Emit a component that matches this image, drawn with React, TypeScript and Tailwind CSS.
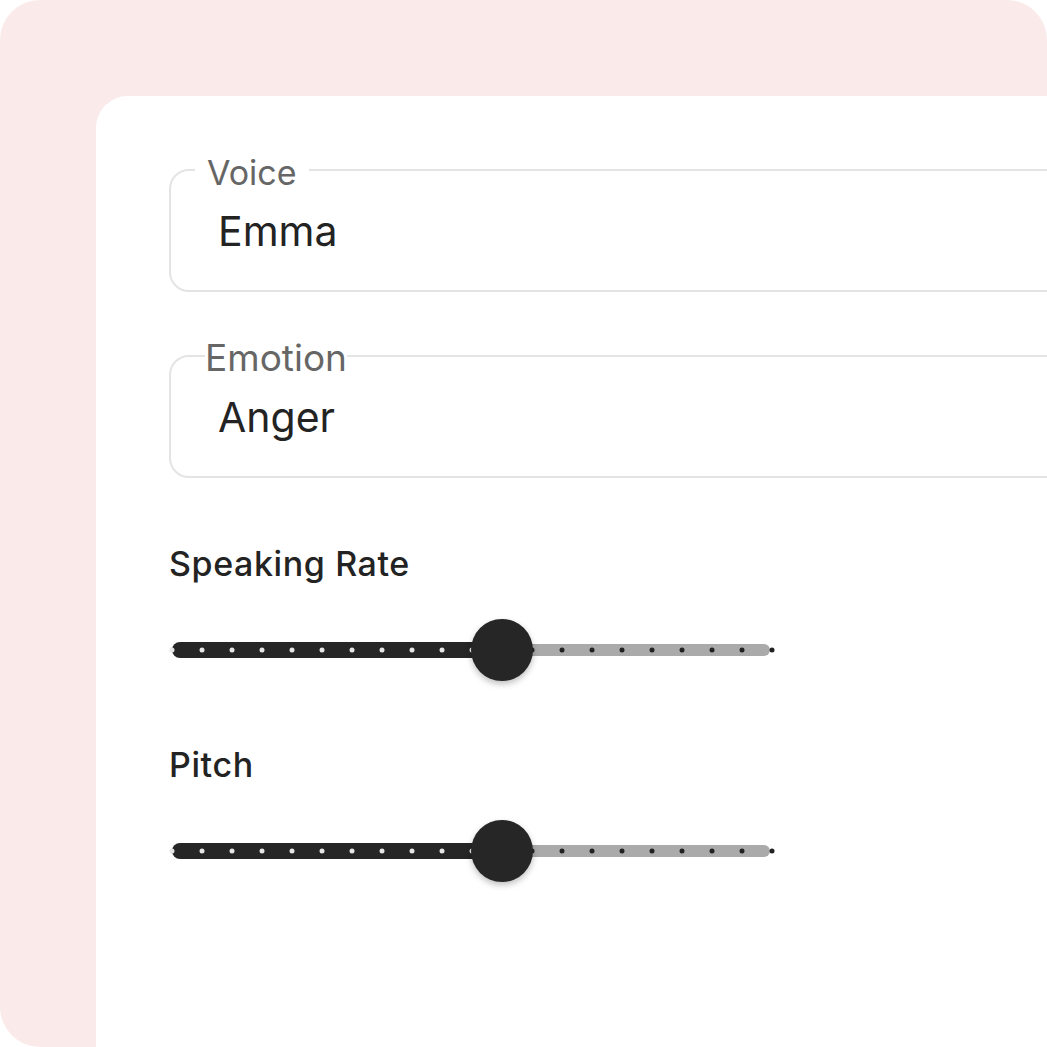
import { useState } from "react";

interface Field {
  label: string;
  value: string;
  legendClass: string;
}

const fields: Field[] = [
  { label: "Voice", value: "Emma", legendClass: "-top-[18px] left-[24px] px-3 text-[34px]" },
  { label: "Emotion", value: "Anger", legendClass: "-top-[19px] left-[34px] px-0 text-[37px]" },
];

const TICKS = Array.from({ length: 21 }, (_, i) => i);
const STEP = 30;

function OutlinedField({ field }: { field: Field }) {
  return (
    <div className="relative h-[123px] w-[1000px] rounded-[20px] border-2 border-[#e4e4e4]">
      <span className={`absolute ${field.legendClass} bg-white leading-[40px] text-[#666666]`}>
        {field.label}
      </span>
      <div className="pl-[47px] pt-[36px] text-[41px] leading-[48px] text-[#232323]">{field.value}</div>
    </div>
  );
}

function DotSlider({ label, initial }: { label: string; initial: number }) {
  const [value] = useState(initial);
  const pos = value * STEP;

  return (
    <div className="flex flex-col">
      <div className="text-[34px] font-medium leading-[40px] tracking-[0.6px] text-[#232323]">{label}</div>
      <div className="relative mt-[34px] ml-[3px] h-[64px] w-[600px]">
        <div
          className="absolute top-1/2 left-0 h-[16px] -translate-y-1/2 rounded-l-full bg-[#262626]"
          style={{ width: pos }}
        />
        <div
          className="absolute top-1/2 h-[12px] -translate-y-1/2 rounded-r-full bg-[#aaaaaa]"
          style={{ left: pos, width: 600 - pos - 2 }}
        />
        {TICKS.map((tick) => (
          <span
            key={tick}
            className={`absolute top-1/2 h-[5px] w-[5px] -translate-x-1/2 -translate-y-1/2 rounded-full ${
              tick < value ? "bg-[#e6e6e6]" : "bg-[#222222]"
            }`}
            style={{ left: tick * STEP }}
          />
        ))}
        <div
          className="absolute top-1/2 h-[62px] w-[62px] -translate-x-1/2 -translate-y-1/2 rounded-full bg-[#262626] shadow-[0_3px_6px_rgba(0,0,0,0.25)]"
          style={{ left: pos }}
        />
      </div>
    </div>
  );
}

export default function App() {
  return (
    <div
      className="h-[1047px] w-[1047px] bg-white"
      style={{ fontFamily: "Inter, 'Noto Sans', sans-serif" }}
    >
      <div className="flex h-full w-full flex-col rounded-[40px] bg-[#fbeaea] pt-[96px] pl-[96px]">
        <div className="flex-1 overflow-hidden rounded-tl-[32px] bg-white pt-[73px] pl-[73px]">
          <div className="flex flex-col gap-[63px]">
            {fields.map((field) => (
              <OutlinedField key={field.label} field={field} />
            ))}
          </div>
          <div className="mt-[66px] flex flex-col gap-[63px]">
            <DotSlider label="Speaking Rate" initial={11} />
            <DotSlider label="Pitch" initial={11} />
          </div>
        </div>
      </div>
    </div>
  );
}
